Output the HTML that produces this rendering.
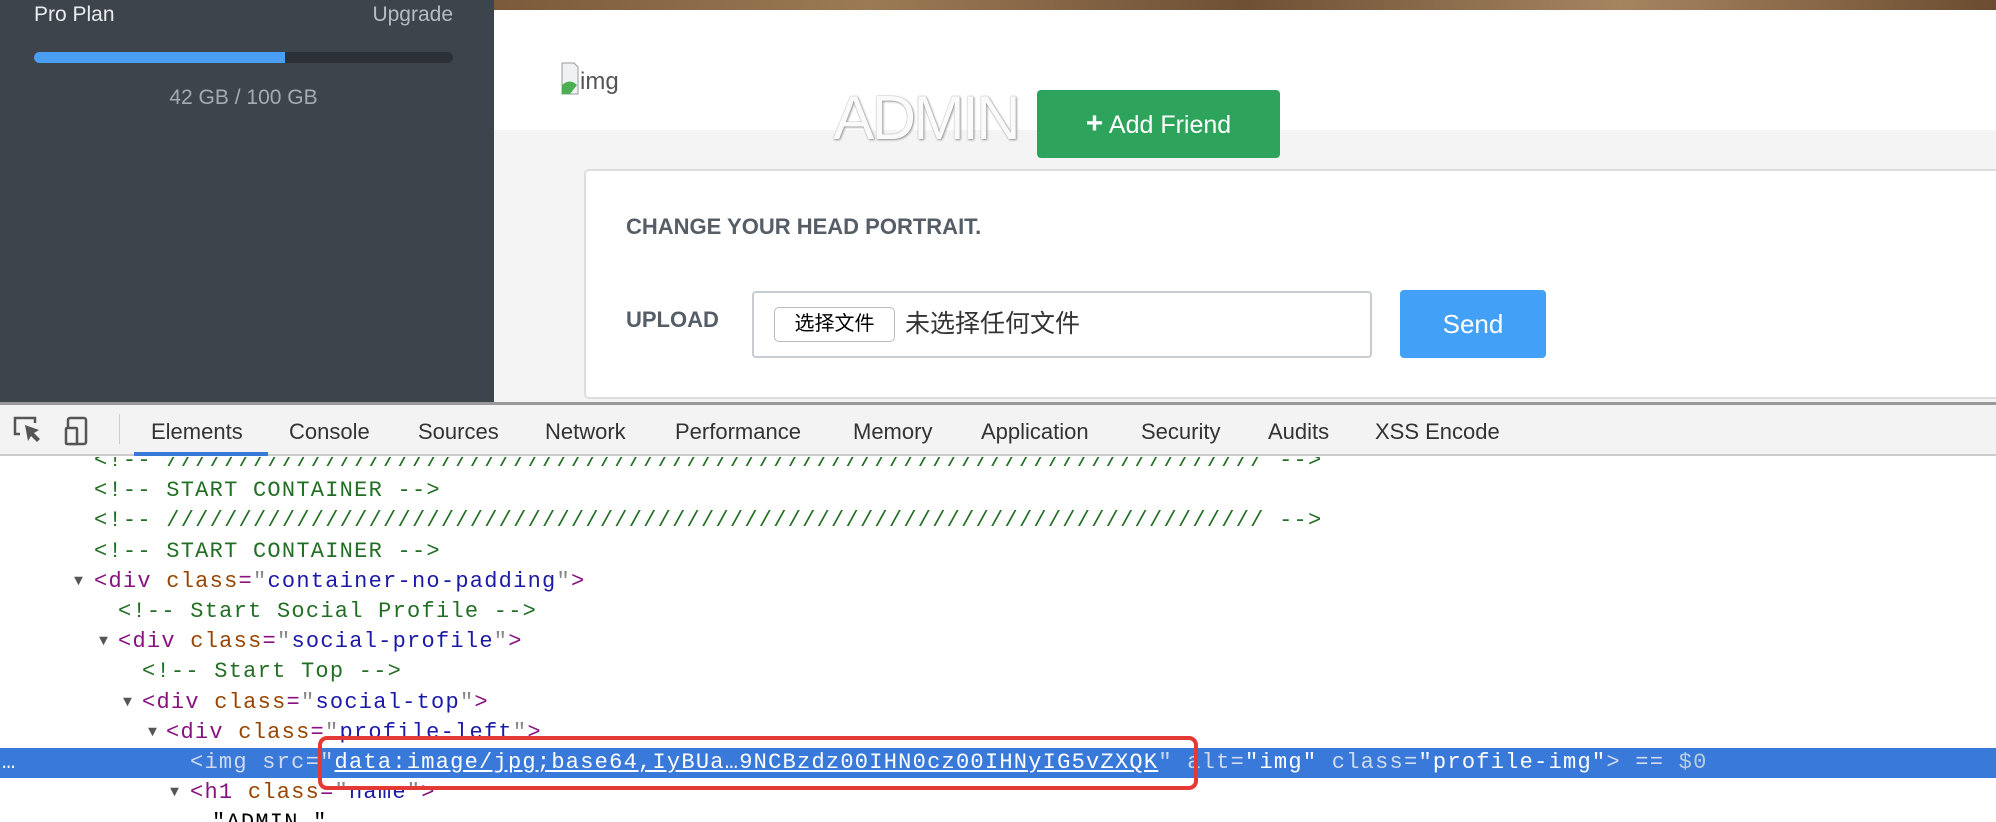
<!DOCTYPE html>
<html><head><meta charset="utf-8"><style>
*{margin:0;padding:0;box-sizing:border-box}
body{width:1996px;height:822px;overflow:hidden;position:relative;background:#fff;font-family:"Liberation Sans","Noto Sans CJK SC",sans-serif}
.a{position:absolute}
.code{position:absolute;left:0;top:446px;width:1996px;font-family:"Liberation Mono",monospace;font-size:22px;letter-spacing:1.25px;}
.code div{height:30.2px;line-height:30.2px;white-space:pre;position:relative}
.c{color:#236e25}.t{color:#881280}.n{color:#994500}.v{color:#1a1aa6}.p{color:#888}
.tri{position:absolute;font-size:15px;color:#555;letter-spacing:0}
.tab{position:absolute;top:419px;font-size:22px;color:#333}
</style></head><body>
<div class="a" style="left:0;top:0;width:494px;height:405px;background:#3d444c"></div>
<div class="a" style="left:34px;top:3px;color:#e9ecef;font-size:21px">Pro Plan</div>
<div class="a" style="left:360px;top:3px;width:93px;text-align:right;color:#b5bcc4;font-size:21px">Upgrade</div>
<div class="a" style="left:34px;top:52px;width:419px;height:11px;border-radius:6px;background:#2c3138"></div>
<div class="a" style="left:34px;top:52px;width:251px;height:11px;border-radius:6px 0 0 6px;background:#4a9ff5"></div>
<div class="a" style="left:34px;top:86px;width:419px;text-align:center;color:#a4abb3;font-size:21px">42 GB / 100 GB</div>

<div class="a" style="left:494px;top:0;width:1502px;height:10px;background:linear-gradient(90deg,#7a5a3a,#9b7a55,#6e5035,#a58560,#6b4c30)"></div>
<div class="a" style="left:494px;top:10px;width:1502px;height:120px;background:#fff"></div>
<div class="a" style="left:494px;top:130px;width:1502px;height:275px;background:#f4f4f4"></div>
<svg class="a" style="left:561px;top:62px" width="18" height="33" viewBox="0 0 18 33"><path d="M1 1h12l4 4v27H1z" fill="#eef2f5" stroke="#999"/><path d="M1 32 L1 23 Q9 16 16 23 L9 32z" fill="#4caf50"/></svg>
<div class="a" style="left:580px;top:68px;color:#555;font-size:24px">img</div>
<div class="a" style="left:833px;top:83px;color:#fafafa;font-size:62px;font-weight:lighter;letter-spacing:-3px;text-shadow:0 0 1px #777,1px 1px 2px #999">ADMIN</div>
<div class="a" style="left:1037px;top:90px;width:243px;height:68px;background:#2ea35b;border-radius:4px;color:#fff;font-size:25px;line-height:68px;text-align:center"><b style="font-size:30px">+</b> Add Friend</div>

<div class="a" style="left:584px;top:169px;width:1420px;height:230px;background:#fff;border:2px solid #ddd;border-radius:5px"></div>
<div class="a" style="left:626px;top:214px;color:#555d66;font-size:22px;font-weight:bold">CHANGE YOUR HEAD PORTRAIT.</div>
<div class="a" style="left:626px;top:307px;color:#555d66;font-size:22px;font-weight:bold">UPLOAD</div>
<div class="a" style="left:752px;top:291px;width:620px;height:67px;border:2px solid #c8cbd0;border-radius:4px;background:#fff"></div>
<div class="a" style="left:774px;top:307px;width:121px;height:35px;border:1px solid #bbb;border-radius:5px;background:#fff;font-size:20px;line-height:33px;text-align:center">选择文件</div>
<div class="a" style="left:905px;top:304px;font-size:25px;color:#333">未选择任何文件</div>
<div class="a" style="left:1400px;top:290px;width:146px;height:68px;background:#43a0f7;border-radius:4px;color:#fff;font-size:26px;line-height:68px;text-align:center">Send</div>

<div class="a" style="left:0;top:402px;width:1996px;height:3px;background:#999"></div>
<div class="a" style="left:0;top:405px;width:1996px;height:51px;background:#f3f3f3;border-bottom:2px solid #ccc"></div>
<svg class="a" style="left:12px;top:414px" width="90" height="34" viewBox="0 0 90 34"><path d="M8 20H3V4h20v5" fill="none" stroke="#555" stroke-width="2.5"/><path d="M13 11l3 16 3-5 6 6 3-3-6-6 5-3z" fill="#555"/><rect x="56" y="4" width="18" height="26" rx="2" fill="none" stroke="#555" stroke-width="2.5"/><rect x="54" y="14" width="11" height="16" rx="1" fill="#f3f3f3" stroke="#555" stroke-width="2.5"/></svg>
<div class="a" style="left:119px;top:414px;width:1px;height:30px;background:#ccc"></div>
<div class="a" style="left:134px;top:452px;width:134px;height:4px;background:#3879d9"></div>
<div class="tab" style="left:151px">Elements</div>
<div class="tab" style="left:289px">Console</div>
<div class="tab" style="left:418px">Sources</div>
<div class="tab" style="left:545px">Network</div>
<div class="tab" style="left:675px">Performance</div>
<div class="tab" style="left:853px">Memory</div>
<div class="tab" style="left:981px">Application</div>
<div class="tab" style="left:1141px">Security</div>
<div class="tab" style="left:1268px">Audits</div>
<div class="tab" style="left:1375px">XSS Encode</div>

<div class="a" style="left:0;top:0;width:1996px;height:822px;overflow:hidden;clip-path:inset(457px 0 0 0)">
<div class="code">
<div style="padding-left:94px" class="c">&lt;!-- //////////////////////////////////////////////////////////////////////////// --&gt;</div>
<div style="padding-left:94px" class="c">&lt;!-- START CONTAINER --&gt;</div>
<div style="padding-left:94px" class="c">&lt;!-- //////////////////////////////////////////////////////////////////////////// --&gt;</div>
<div style="padding-left:94px" class="c">&lt;!-- START CONTAINER --&gt;</div>
<div style="padding-left:94px"><span class="tri" style="left:74px">▼</span><span class="t">&lt;div</span> <span class="n">class</span><span class="t">=</span><span class="p">"</span><span class="v">container-no-padding</span><span class="p">"</span><span class="t">&gt;</span></div>
<div style="padding-left:118px" class="c">&lt;!-- Start Social Profile --&gt;</div>
<div style="padding-left:118px"><span class="tri" style="left:99px">▼</span><span class="t">&lt;div</span> <span class="n">class</span><span class="t">=</span><span class="p">"</span><span class="v">social-profile</span><span class="p">"</span><span class="t">&gt;</span></div>
<div style="padding-left:142px" class="c">&lt;!-- Start Top --&gt;</div>
<div style="padding-left:142px"><span class="tri" style="left:123px">▼</span><span class="t">&lt;div</span> <span class="n">class</span><span class="t">=</span><span class="p">"</span><span class="v">social-top</span><span class="p">"</span><span class="t">&gt;</span></div>
<div style="padding-left:166px"><span class="tri" style="left:148px">▼</span><span class="t">&lt;div</span> <span class="n">class</span><span class="t">=</span><span class="p">"</span><span class="v">profile-left</span><span class="p">"</span><span class="t">&gt;</span></div>
<div style="padding-left:190px;background:#3879d9;color:#fff"><span class="a" style="left:2px;top:0">…</span><span style="color:#cfd9ef">&lt;img src=</span><span style="color:#cfd9ef">"</span><span style="text-decoration:underline">data:image/jpg;base64,IyBUa…9NCBzdz00IHN0cz00IHNyIG5vZXQK</span><span style="color:#cfd9ef">" alt=</span>"img"<span style="color:#cfd9ef"> class=</span>"profile-img"<span style="color:#cfd9ef">&gt; == </span><span style="color:#bcd">$0</span></div>
<div style="padding-left:190px"><span class="tri" style="left:170px">▼</span><span class="t">&lt;h1</span> <span class="n">class</span><span class="t">=</span><span class="p">"</span><span class="v">name</span><span class="p">"</span><span class="t">&gt;</span></div>
<div style="padding-left:212px">"ADMIN "</div>
</div></div>
<div class="a" style="left:318px;top:736px;width:880px;height:54px;border:4px solid #e53935;border-radius:9px"></div>
</body></html>
